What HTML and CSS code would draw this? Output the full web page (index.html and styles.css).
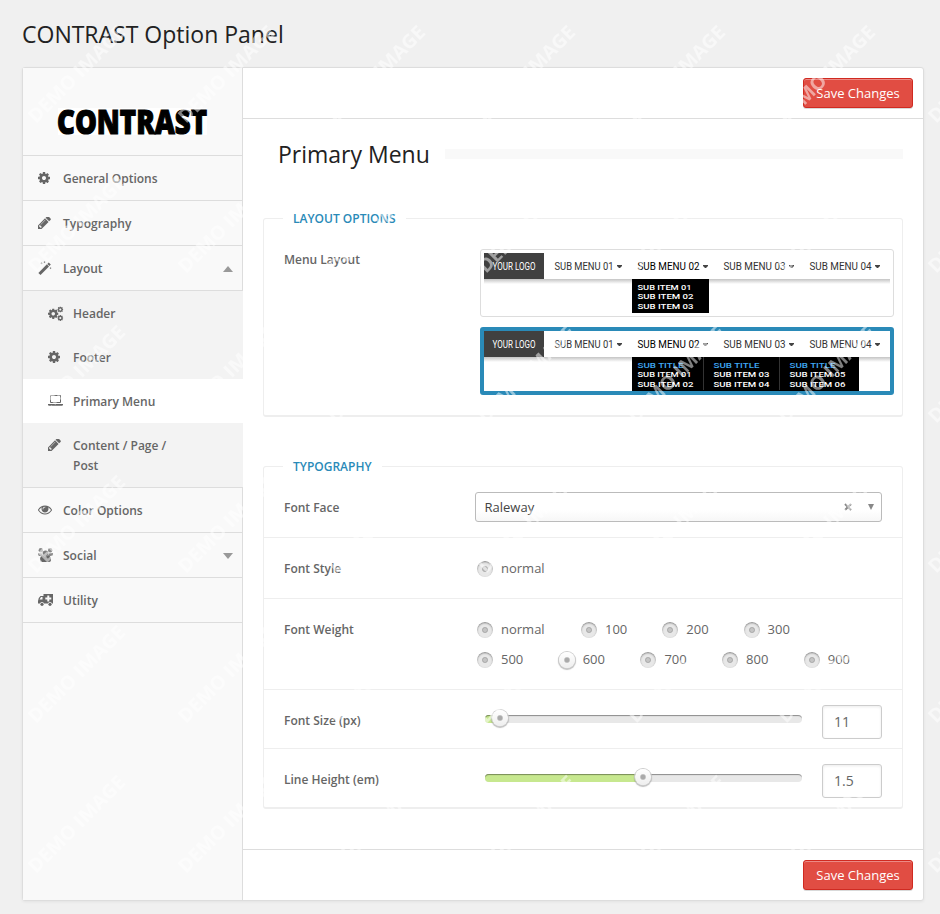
FILE: index.html
```html
<!DOCTYPE html>
<html lang="en">
<head>
<meta charset="utf-8">
<title>CONTRAST Option Panel</title>
<link rel="stylesheet" href="styles.css">
</head>
<body>
<svg class="defs" aria-hidden="true">
  <symbol id="cog" viewBox="0 -128 1536 1536"><path fill-rule="evenodd" d="M1024 640q0-106-75-181t-181-75-181 75-75 181 75 181 181 75 181-75 75-181zm512-109v222q0 12-8 23t-20 13l-185 28q-19 54-39 91 35 50 107 138 10 12 10 25t-9 23q-27 37-99 108t-94 71q-12 0-26-9l-138-108q-44 23-91 38-16 136-29 186-7 28-36 28h-222q-14 0-24.500-8.500t-11.500-21.500l-28-184q-49-16-90-37l-141 107q-10 9-25 9-14 0-25-11-126-114-165-168-7-10-7-23 0-12 8-23 15-21 51-66.500t54-70.500q-27-50-41-99l-183-27q-13-2-21-12.500t-8-23.500v-222q0-12 8-23t19-13l186-28q14-46 39-92-40-57-107-138-10-12-10-24 0-10 9-23 26-36 98.500-107.500t94.500-71.500q13 0 26 10l138 107q44-23 91-38 16-136 29-186 7-28 36-28h222q14 0 24.500 8.500t11.500 21.500l28 184q49 16 90 37l142-107q9-9 24-9 13 0 25 10 129 119 165 170 7 8 7 22 0 12-8 23-15 21-51 66.500t-54 70.500q26 50 41 98l183 28q13 2 21 12.500t8 23.500z"/></symbol>
  <symbol id="pencil" viewBox="128 256 1536 1536"><path d="M491 1536l91-91-235-235-91 91v107h128v128h107zm523-928q0-22-22-22-10 0-17 7l-542 542q-7 7-7 17 0 22 22 22 10 0 17-7l542-542q7-7 7-17zm-54-192l416 416-832 832h-416v-416zm683 96q0 53-37 90l-166 166-416-416 166-165q36-38 90-38 53 0 91 38l235 234q37 39 37 91z"/></symbol>
  <symbol id="eye" viewBox="0 64 1792 1792"><path d="M1664 960q-152-236-381-353 61 104 61 225 0 185-131.500 316.500t-316.500 131.500-316.500-131.500-131.500-316.500q0-121 61-225-229 117-381 353 133 205 333.500 326.500t434.500 121.500 434.500-121.500 333.500-326.500zm-720-384q0-20-14-34t-34-14q-125 0-214.500 89.500t-89.500 214.500q0 20 14 34t34 14 34-14 14-34q0-86 61-147t147-61q20 0 34-14t14-34zm848 384q0 34-20 69-140 230-376.500 368.500t-499.500 138.500-499.500-139-376.500-368q-20-35-20-69t20-69q140-229 376.500-368t499.500-139 499.500 139 376.500 368q20 35 20 69z"/></symbol>
</svg>

<h1 class="page-title">CONTRAST Option Panel</h1>
<div class="panel">
  <aside class="sidebar">
    <div class="brand"><svg width="160" height="40" viewBox="0 -6 160 40"><rect width="149" height="27" y="0" fill="#fff"/><text class="brand-text" x="-1" y="25.500" textLength="150" lengthAdjust="spacingAndGlyphs">CONTRAST</text></svg></div>
    <nav>
      <a class="item"><svg class="ico" width="12" height="12"><use href="#cog"/></svg><span>General Options</span></a>
      <a class="item"><svg class="ico" width="13" height="13"><use href="#pencil"/></svg><span>Typography</span></a>
      <a class="item"><svg class="ico" width="14" height="14" viewBox="0 0 14 14"><path d="M.4 11.900 8.900 3.300l2.100 2.100-8.500 8.500z"/><path d="M9.400 2.900l1.300-1.400 2.100 2.100-1.400 1.400z"/><path d="M3.500.8l.4 1 1 .4-1 .4-.4 1-.4-1-1-.4 1-.4zM6.500 0l.3.800.8.300-.8.300-.3.800-.3-.8-.8-.3.800-.3zM12.500 6l.3.800.8.300-.8.300-.3.800-.3-.8-.8-.3.800-.3z"/></svg><span>Layout</span><i class="arrow up"></i></a>
      <div class="submenu">
        <a class="sub"><svg class="ico" width="15" height="14" viewBox="0 0 15 14"><use href="#cog" x="0" y="1.500" width="10.500" height="10.500"/><use href="#cog" x="9.300" y="-.5" width="6" height="6"/><use href="#cog" x="9.300" y="8" width="6" height="6"/></svg><span>Header</span></a>
        <a class="sub"><svg class="ico" width="12" height="12"><use href="#cog"/></svg><span>Footer</span></a>
        <a class="sub active"><svg class="ico" width="15" height="11" viewBox="0 0 15 11"><path fill-rule="evenodd" d="M3 0h9q1 0 1 1v6q0 1-1 1H3q-1 0-1-1V1q0-1 1-1zm0 1v6h9V1zM0 9h15v.7q0 1.100-1.300 1.100H1.300Q0 10.800 0 9.700z"/></svg><span>Primary Menu</span></a>
        <a class="sub"><svg class="ico" width="13" height="13"><use href="#pencil"/></svg><span>Content / Page / Post</span></a>
      </div>
      <a class="item"><svg class="ico" width="14" height="14"><use href="#eye"/></svg><span>Color Options</span></a>
      <a class="item"><svg class="ico" width="15" height="14" viewBox="0 0 15 14"><g opacity=".75"><circle cx="2.800" cy="2.300" r="2.200"/><circle cx="12.200" cy="2.300" r="2.200"/><path d="M0 5q2 0 4 .5L5 8H1Q0 8 0 5zM15 5q-2 0-4 .5L10 8h4q1 0 1-3z"/></g><circle cx="7.500" cy="5.500" r="2.900" opacity=".85"/><path d="M2 12q0-4.500 2.800-4.500 2.700 2 5.400 0Q13 7.500 13 12q0 2-2 2H4q-2 0-2-2z"/></svg><span>Social</span><i class="arrow down"></i></a>
      <a class="item"><svg class="ico" width="15" height="12" viewBox="0 0 15 12"><path fill-rule="evenodd" d="M5.500 0H15v9.500h-.9a2.200 2.200 0 0 0-4.200 0H6.100a2.200 2.200 0 0 0-4.200 0H0V7l.8-3 1.700-2h3zM9.300 1.500v2h-2v2h2v2h2v-2h2v-2h-2v-2zM4.500 3H3L1.500 5.500h3z"/><circle cx="4" cy="10.300" r="1.600"/><circle cx="12" cy="10.300" r="1.600"/></svg><span>Utility</span></a>
    </nav>
  </aside>
  <main class="main">
    <div class="bar top"><button class="save">Save Changes</button></div>
    <div class="content">
      <div class="heading"><h2>Primary Menu</h2><i></i></div>
      <section class="group layout">
        <h3>LAYOUT OPTIONS</h3>
        <div class="row first">
          <label>Menu Layout</label>
          <div class="choices">
            <div class="choice">
              <svg width="412" height="66" viewBox="481 250 412 66">
                <use href="#menubar"/>
                <path d="M632 279h77v34h-77z"/>
                <g class="px sub-t" fill="#fff">
                  <text x="637.500" y="290" textLength="54" lengthAdjust="spacingAndGlyphs">SUB ITEM 01</text>
                  <text x="637.500" y="299" textLength="56" lengthAdjust="spacingAndGlyphs">SUB ITEM 02</text>
                  <text x="637.500" y="309" textLength="56" lengthAdjust="spacingAndGlyphs">SUB ITEM 03</text>
                </g>
                <defs>
                  <linearGradient id="sh" x2="0" y2="1"><stop stop-color="#c4c4c4"/><stop offset="1" stop-color="#fff"/></linearGradient>
                  <g id="menubar">
                    <path fill="url(#sh)" d="M484 279h406v5H484z"/>
                    <path fill="#fff" d="M484 253h406v26H484z"/>
                    <path fill="#404040" d="M484 253h60v26h-60z"/>
                    <g class="px menu-t" fill="#333">
                      <text x="492.500" y="270" fill="#fff" textLength="43" lengthAdjust="spacingAndGlyphs">YOUR LOGO</text>
                      <text x="554.500" y="270" textLength="59" lengthAdjust="spacingAndGlyphs">SUB MENU 01</text>
                      <text x="637.500" y="270" fill="#000" textLength="62" lengthAdjust="spacingAndGlyphs">SUB MENU 02</text>
                      <text x="723.500" y="270" textLength="62" lengthAdjust="spacingAndGlyphs">SUB MENU 03</text>
                      <text x="809.500" y="270" textLength="62" lengthAdjust="spacingAndGlyphs">SUB MENU 04</text>
                    </g>
                    <path fill="#444" d="M617 265h5v1l-2 2h-1l-2-2zM703 265h5v1l-2 2h-1l-2-2zM789 265h5v1l-2 2h-1l-2-2zM875 265h5v1l-2 2h-1l-2-2z"/>
                  </g>
                </defs>
              </svg>
            </div>
            <div class="choice selected">
              <svg width="406" height="60" viewBox="484 331 406 60">
                <use href="#menubar" y="78"/>
                <path d="M632 357h227v34H632z"/>
                <path fill="#333" d="M703 357h1v33h-1zM779 357h1v33h-1z"/>
                <g class="px sub-t" fill="#fff">
                  <g fill="#3fa9f5">
                    <text x="637.500" y="368" textLength="46" lengthAdjust="spacingAndGlyphs">SUB TITLE</text>
                    <text x="713.500" y="368" textLength="46" lengthAdjust="spacingAndGlyphs">SUB TITLE</text>
                    <text x="789.500" y="368" textLength="46" lengthAdjust="spacingAndGlyphs">SUB TITLE</text>
                  </g>
                  <text x="637.500" y="377" textLength="54" lengthAdjust="spacingAndGlyphs">SUB ITEM 01</text>
                  <text x="637.500" y="387" textLength="56" lengthAdjust="spacingAndGlyphs">SUB ITEM 02</text>
                  <text x="713.500" y="377" textLength="56" lengthAdjust="spacingAndGlyphs">SUB ITEM 03</text>
                  <text x="713.500" y="387" textLength="56" lengthAdjust="spacingAndGlyphs">SUB ITEM 04</text>
                  <text x="789.500" y="377" textLength="56" lengthAdjust="spacingAndGlyphs">SUB ITEM 05</text>
                  <text x="789.500" y="387" textLength="56" lengthAdjust="spacingAndGlyphs">SUB ITEM 06</text>
                </g>
              </svg>
            </div>
          </div>
        </div>
      </section>
      <section class="group typo">
        <h3>TYPOGRAPHY</h3>
        <div class="row face"><label>Font Face</label>
          <div class="select"><span>Raleway</span><svg class="clear" width="8" height="8" viewBox="0 0 8 8"><path d="M1 1l6 6M7 1L1 7"/></svg><i class="caret"></i></div>
        </div>
        <div class="row style"><label>Font Style</label>
          <div class="radios"><span class="opt"><i class="radio"></i>normal</span></div>
        </div>
        <div class="row weight"><label>Font Weight</label>
          <div class="radios">
            <div class="line one"><span class="opt"><i class="radio"></i>normal</span><span class="opt"><i class="radio"></i>100</span><span class="opt"><i class="radio"></i>200</span><span class="opt"><i class="radio"></i>300</span></div>
            <div class="line two"><span class="opt"><i class="radio"></i>500</span><span class="opt"><i class="radio on"></i>600</span><span class="opt"><i class="radio"></i>700</span><span class="opt"><i class="radio"></i>800</span><span class="opt"><i class="radio"></i>900</span></div>
          </div>
        </div>
        <div class="row size"><label>Font Size (px)</label>
          <div class="slider"><i class="fill" style="width:5%"></i><i class="knob" style="left:5%"></i></div>
          <div class="num">11</div>
        </div>
        <div class="row size"><label>Line Height (em)</label>
          <div class="slider"><i class="fill" style="width:50%"></i><i class="knob" style="left:50%"></i></div>
          <div class="num">1.5</div>
        </div>
      </section>
    </div>
    <div class="bar bottom"><button class="save">Save Changes</button></div>
  </main>
</div>
<svg class="stamp" width="940" height="914" aria-hidden="true">
  <pattern id="tile" width="150" height="150" patternUnits="userSpaceOnUse">
    <text transform="translate(36 124) rotate(-45)" textLength="128" lengthAdjust="spacingAndGlyphs">DEMO IMAGE</text>
  </pattern>
  <rect width="940" height="914" fill="url(#tile)"/>
</svg>
</body>
</html>
```
FILE: styles.css
```css
* { box-sizing: border-box; }
body {
  margin: 0;
  height: 914px;
  overflow: hidden;
  background: #f0f0f0;
  font: 13px/20px "Open Sans", sans-serif;
  color: #666;
}
.defs { display: none; }
.page-title {
  margin: 0;
  padding: 19px 22px 0;
  height: 67px;
  font-size: 23px;
  font-weight: 400;
  line-height: 31px;
  color: #222;
}
.panel {
  display: flex;
  width: 902px;
  height: 834px;
  margin-left: 22px;
  background: #fff;
  border: 1px solid #ddd;
  border-radius: 3px;
  box-shadow: 0 1px 3px rgba(0, 0, 0, .06);
}
.sidebar {
  width: 220px;
  flex: none;
  background: #f9f9f9;
  border-right: 1px solid #ddd;
}
.brand {
  height: 88px;
  padding: 34px 0 0 35px;
  border-bottom: 1px solid #ddd;
}
.brand svg { display: block; overflow: visible; }
.brand-text { font: 800 34px "Open Sans", sans-serif; fill: #000; stroke: #000; stroke-width: 1.2px; }
.item {
  display: grid;
  grid-template-columns: 25px 1fr auto;
  align-items: center;
  height: 45px;
  padding: 0 9px 0 15px;
  border-bottom: 1px solid #ddd;
}
.item, .sub { font-size: 12px; font-weight: 600; }
.item span { padding-top: 2px; }
.ico { fill: #666; overflow: visible; }
.sub {
  display: grid;
  grid-template-columns: 25px 120px;
  padding: 13px 0 11px 25px;
}
.sub .ico { margin-top: 3px; }
.submenu { background: #f3f3f3; margin-right: -1px; position: relative; border-bottom: 1px solid #ddd; }
.sub.active { background: #fff; }
.arrow { border: 5px solid transparent; margin-top: 2px; }
.up { border-bottom: 6px solid #999; border-top: 0; }
.down { border-top: 6px solid #999; border-bottom: 0; }
.main { flex: 1; display: flex; flex-direction: column; }
.bar { display: flex; justify-content: flex-end; padding: 10px 10px 0; height: 51px; }
.top { border-bottom: 1px solid #ddd; }
.bottom { border-top: 1px solid #ddd; }
.save {
  width: 110px;
  height: 30px;
  padding: 0;
  font: 13px/26px "Open Sans", sans-serif;
  color: #fff;
  background: #e14d43;
  border: 1px solid #d02a21;
  border-radius: 3px;
  box-shadow: inset 0 1px 0 #ec8a85, 0 1px 0 rgba(0, 0, 0, .15);
}
.content { flex: 1; padding: 20px 20px 0; }
.heading { display: flex; align-items: center; height: 31px; padding-left: 15px; gap: 15px; }
.heading h2 { margin: 0; font-size: 23px; font-weight: 400; line-height: 31px; color: #222; }
.heading i { flex: 1; height: 10px; margin-bottom: 2px; background: #f9f9f9; }
.group { border: 1px solid #eee; border-bottom-width: 2px; border-radius: 3px; }
.group h3 {
  width: fit-content;
  margin: -10px 0 0 19px;
  padding: 0 10px;
  background: #fff;
  font-size: 12px;
  font-weight: 600;
  line-height: 19px;
  color: #2a8ab8;
}
.layout { margin-top: 48px; height: 199px; }
.typo { margin-top: 49px; height: 343px; }
.row { display: flex; padding-left: 20px; }
.row + .row { border-top: 1px solid #eee; }
label { width: 191px; flex: none; margin-top: 1px; font-size: 12px; font-weight: 600; }
.first { padding-top: 21px; }
.first label { width: 196px; }
.choices { display: grid; gap: 10px; }
.choice { width: 414px; height: 68px; border: 1px solid #ddd; border-radius: 3px; }
.choice.selected { border: 4px solid #2a8ab8; }
.choice svg { display: block; }
.px { font-family: Roboto, sans-serif; }
.menu-t { font-size: 10.500px; }
.sub-t { font-size: 7.500px; font-weight: 500; }
.face { height: 61px; padding-top: 16px; }
.face label { padding-top: 5px; }
.select {
  display: flex;
  align-items: center;
  width: 407px;
  height: 30px;
  padding: 0 7px 0 9px;
  border: 1px solid #bbb;
  border-radius: 3px;
  background: linear-gradient(#fff 60%, #f7f7f7);
  color: #444;
}
.select span { flex: 1; margin-left: -.5px; }
.clear { fill: none; stroke: #888; stroke-width: 2; margin-right: 16px; }
.caret { border: 3.500px solid transparent; border-top: 6px solid #888; border-bottom: 0; }
.style { height: 61px; padding-top: 20px; }
.weight { height: 91px; padding-top: 20px; }
.opt { display: flex; align-items: center; width: 81.700px; }
.line { display: flex; height: 30px; align-items: flex-start; }
.one .opt:first-child { width: 104px; }
.one .opt + .opt { width: 81.300px; }
.radio {
  width: 16px;
  height: 16px;
  margin: 1px 8px 0 2px;
  flex: none;
  border-radius: 50%;
  background: radial-gradient(circle, #c4c4c4 0 1.500px, #b0b0b0 2px 2.500px, transparent 3.500px), #e8e8e8;
  box-shadow: inset 0 1px 2px rgba(0, 0, 0, .45);
}
.radio.on, .knob {
  width: 16px;
  height: 16px;
  background: radial-gradient(circle, #aaa 0 2px, transparent 3.500px), linear-gradient(#fff, #eee);
  box-shadow: 0 0 0 1px #ccc, 0 1px 1px 1px rgba(0, 0, 0, .25);
}
.radio.on { margin: 1px 8px 0 2px; }
.size { height: 59px; padding-top: 15px; }
.size label { width: 201px; padding-top: 5px; }
.size + .size { height: 60px; }
.slider {
  position: relative;
  width: 317px;
  height: 8px;
  margin-top: 10px;
  border-radius: 4px;
  background: #e8e8e8;
  box-shadow: inset 0 2px 1px -1px rgba(0, 0, 0, .4);
}
.fill { display: block; height: 8px; border-radius: 4px 0 0 4px; background: #c7e88f; box-shadow: inset 0 2px 1px -1px rgba(0, 0, 0, .4); }
.knob { position: absolute; top: -5px; margin-left: -8.500px; border-radius: 50%; }
.num {
  width: 60px;
  height: 34px;
  margin-left: 20px;
  padding-left: 11px;
  border: 1px solid #ccc;
  border-radius: 3px;
  background: #fff;
  box-shadow: inset 0 1px 3px rgba(0, 0, 0, .08);
  font-size: 14px;
  line-height: 32px;
}
.stamp { position: absolute; left: 0; top: 0; pointer-events: none; }
.stamp text { font: 700 19px "Open Sans", sans-serif; fill: #fff; fill-opacity: .5; }
```
